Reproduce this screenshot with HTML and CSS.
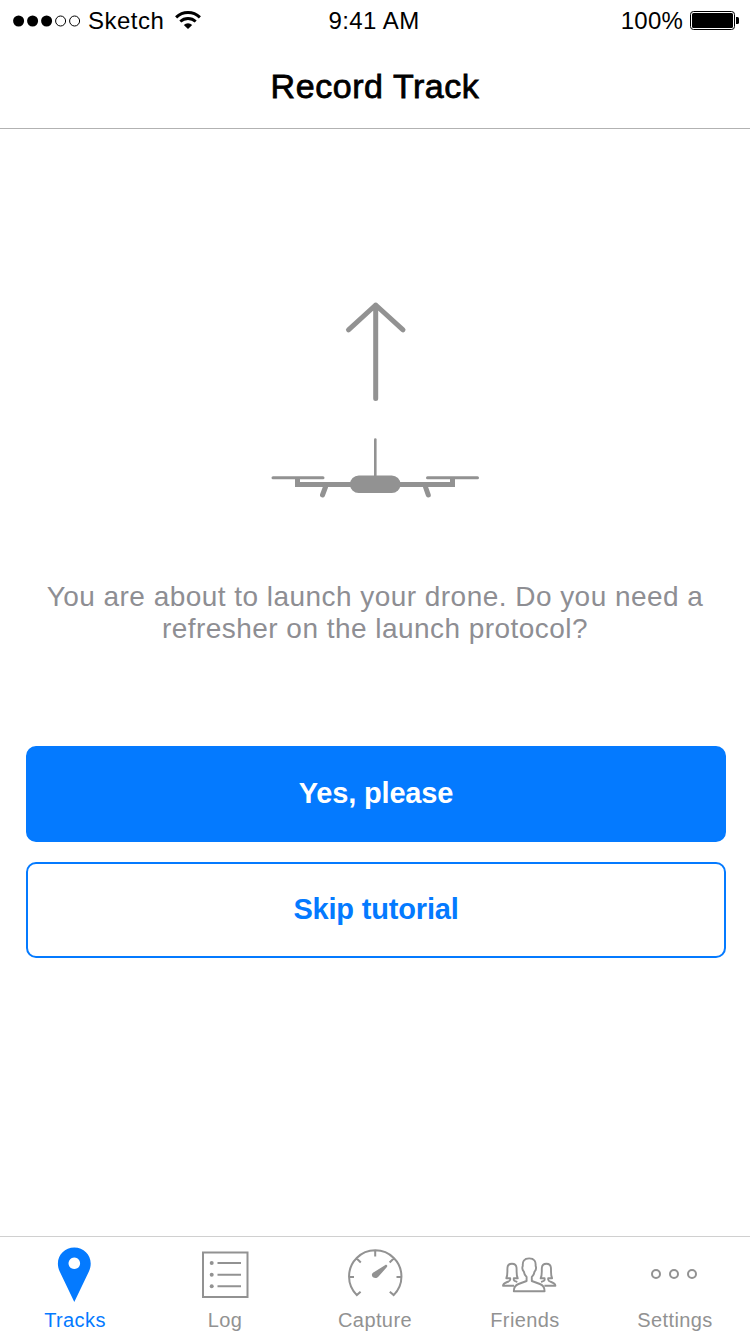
FILE: index.html
```html
<!DOCTYPE html>
<html lang="en">
<head>
<meta charset="utf-8">
<title>Record Track</title>
<link rel="stylesheet" href="styles.css">
</head>
<body>
<div class="screen">
  <header class="header">
    <div class="status">
      <div class="status-left">
        <svg class="signal" width="68" height="12" viewBox="0 0 68 12">
          <circle cx="5.6" cy="6" r="5.5"/><circle cx="19.6" cy="6" r="5.5"/><circle cx="33.6" cy="6" r="5.5"/>
          <g fill="none" stroke="#000"><circle cx="47.6" cy="6" r="5"/><circle cx="61.6" cy="6" r="5"/></g>
        </svg>
        <span class="carrier">Sketch</span>
        <svg class="wifi" width="26" height="18" viewBox="0 0 26 18">
          <g fill="none" stroke="#000" stroke-width="3">
            <path d="M1.1 6.4Q6.2 1.6 13 1.6T24.9 6.4"/>
            <path d="M5.300 10.600Q8.600 7.500 13 7.500T20.700 10.600" stroke-width="2.800"/>
          </g>
          <path d="M8.800 14Q10.600 12.300 13 12.300T17.200 14L13 18Z"/>
        </svg>
      </div>
      <div class="clock">9:41 AM</div>
      <div class="status-right">
        <span class="percent">100%</span>
        <svg class="battery" width="49" height="20" viewBox="0 0 49 20">
          <rect x=".5" y=".5" width="44" height="18" rx="3" fill="none" stroke="#000"/>
          <rect x="2" y="2" width="41" height="15" rx="1.500"/>
          <path d="M46 6h1.500q1.500 0 1.500 1.500v4q0 1.500-1.500 1.500H46z"/>
        </svg>
      </div>
    </div>
    <h1 class="title">Record Track</h1>
  </header>
  <main class="content">
    <svg class="drone" width="208" height="198" viewBox="271 301 208 198" fill="none" stroke="#929292" stroke-linecap="round">
      <path d="M375.700 398.500V305M348.500 329.800L375.700 305L403 329.800" stroke-width="5" stroke-linejoin="round"/>
      <path d="M375.300 439.500V476" stroke-width="2.600"/>
      <path d="M273 477.700H323M427.500 477.700H477.500" stroke-width="3"/>
      <path d="M297.500 478V484.500H452.500V478" stroke-width="5" stroke-linecap="butt"/>
      <path d="M325.500 487L322.500 495M425.500 487L428.300 495" stroke-width="5"/>
      <rect x="350" y="475.500" width="50.500" height="17.500" rx="8.750" fill="#929292" stroke="none"/>
    </svg>
    <p class="message">You are about to launch your drone. Do you need a<br>refresher on the launch protocol?</p>
    <div class="actions">
      <button class="button button-primary" type="button">Yes, please</button>
      <button class="button button-outline" type="button">Skip tutorial</button>
    </div>
  </main>
  <nav class="tabs">
    <a class="tab tab-active">
      <svg class="icon" width="60" height="60" viewBox="45 1245 60 60">
        <path fill="#047aff" fill-rule="evenodd" d="M74.300 1302L59.700 1271.500C54 1259 62.500 1247.500 74.300 1247.500S94.600 1259 88.900 1271.500ZM74.300 1257.500a5.800 5.800 0 1 0 .01 0Z"/>
      </svg>
      <span class="label">Tracks</span>
    </a>
    <a class="tab">
      <svg class="icon" width="60" height="60" viewBox="195 1245 60 60" fill="none" stroke="#929292" stroke-width="2">
        <rect x="203" y="1252.500" width="44.500" height="44.500"/>
        <path d="M217.500 1263H241M217.500 1274.700H241M217.500 1286.300H241"/>
        <g fill="#929292" stroke="none"><circle cx="211.700" cy="1263" r="2"/><circle cx="211.700" cy="1274.700" r="2"/><circle cx="211.700" cy="1286.300" r="2"/></g>
      </svg>
      <span class="label">Log</span>
    </a>
    <a class="tab">
      <svg class="icon" width="60" height="60" viewBox="345 1244.500 60 60" fill="none" stroke="#929292" stroke-width="2">
        <path d="M360.600 1291.200L356.800 1294.600A26.200 26.200 0 1 1 393.700 1294.600L389.800 1291.200M375.200 1250V1256M349 1276.500H354M396.500 1276.500H401.500M356.700 1258L360.800 1262M393.700 1258L389.600 1262"/>
        <path d="M386.700 1264.500C387.800 1265.300 387.200 1266.200 386.500 1267L378.300 1276.300C375.500 1279.400 370 1276 372.500 1272.800C373 1272.200 373.500 1271.900 374.200 1271.500L385 1264.800C385.600 1264.400 386.200 1264.200 386.700 1264.500Z" fill="#929292" stroke="none"/>
      </svg>
      <span class="label">Capture</span>
    </a>
    <a class="tab">
      <svg class="icon" width="60" height="60" viewBox="495 1245 60 60" overflow="visible" fill="none" stroke="#929292" stroke-width="1.900" stroke-linejoin="round">
        <path d="M529.200 1258.400C524 1258.400 522.400 1261.500 522.800 1266C521.800 1267.500 522.600 1270.500 523.800 1271.500C524.300 1274.500 525.400 1276 526.600 1277V1281L518.500 1284C515 1285.300 513.800 1287 513.800 1291.200H544.600C544.600 1287 543.400 1285.300 539.900 1284L531.800 1281V1277C533 1276 534.100 1274.500 534.600 1271.500C535.800 1270.500 536.600 1267.500 535.600 1266C536 1261.500 534.400 1258.400 529.200 1258.400Z"/>
        <path d="M514 1285.700H503C503.200 1281.500 510 1282.500 510.200 1279.800V1278.300H506.300C508 1275 507.100 1271 507.500 1267.500C507.900 1262.400 516.100 1262.400 516.500 1267.500C516.900 1271 516 1275 517.700 1278.300H513.800V1280C514 1281 515 1281.200 517.300 1282"/>
        <path d="M544.400 1285.700H555.400C555.200 1281.500 548.400 1282.500 548.200 1279.800V1278.300H552.100C550.400 1275 551.300 1271 550.900 1267.500C550.500 1262.400 542.300 1262.400 541.900 1267.500C541.500 1271 542.400 1275 540.700 1278.300H544.600V1280C544.400 1281 543.400 1281.200 541.100 1282"/>
      </svg>
      <span class="label">Friends</span>
    </a>
    <a class="tab">
      <svg class="icon" width="60" height="60" viewBox="645 1245 60 60" fill="none" stroke="#929292" stroke-width="2">
        <circle cx="656" cy="1274" r="4"/><circle cx="674" cy="1274" r="4"/><circle cx="692" cy="1274" r="4"/>
      </svg>
      <span class="label">Settings</span>
    </a>
  </nav>
</div>
</body>
</html>
```
FILE: styles.css
```css
* { box-sizing: border-box; }
body { margin: 0; background: #fff; font-family: "Liberation Sans", Arial, sans-serif; }
.screen { width: 750px; height: 1334px; display: flex; flex-direction: column; overflow: hidden; }
.header { height: 129px; border-bottom: 1px solid #b2b2b2; }
.status { height: 41px; display: grid; grid-template-columns: 1fr auto 1fr; align-items: center; padding: 1px 11px 0 13px; font-size: 24px; line-height: 40px; color: #000; }
.status-left, .status-right { display: flex; align-items: center; }
.status-right { justify-content: flex-end; }
.status svg { display: block; }
.signal { margin-top: -1px; }
.carrier { margin-left: 7px; letter-spacing: .5px; }
.wifi { margin: -3px 0 0 11px; }
.clock { margin-right: 4px; letter-spacing: .45px; }
.percent { margin-right: 7px; letter-spacing: .2px; }
.battery { margin-top: -1px; }
.title { margin: 25px 0 0; text-align: center; font-size: 34px; line-height: 40px; font-weight: 400; letter-spacing: .55px; -webkit-text-stroke: .8px #000; }
.content { flex: 1; display: flex; flex-direction: column; align-items: center; padding-top: 172px; }
.drone { display: block; flex: none; }
.message { margin: 82px 0 0; text-align: center; font-size: 28px; line-height: 32px; color: #8e8e93; white-space: nowrap; letter-spacing: .46px; }
.actions { display: flex; flex-direction: column; gap: 20px; width: 700px; margin: 101px 0 0 2px; }
.button { height: 96px; padding: 0 0 2px; border: 2px solid #047aff; border-radius: 10px; font: 700 29px/34px "Liberation Sans", Arial, sans-serif; letter-spacing: -.18px; }
.button-primary { background: #047aff; color: #fff; }
.button-outline { background: #fff; color: #047aff; }
.tabs { height: 98px; flex: none; display: grid; grid-template-columns: repeat(5, 150px); border-top: 1px solid #d0d0d0; }
.tab { display: flex; flex-direction: column; align-items: center; padding-top: 8px; color: #929292; font-size: 20px; line-height: 24px; letter-spacing: .4px; }
.tab-active { color: #047aff; }
.icon { display: block; flex: none; }
.label { margin-top: 3px; }
```
